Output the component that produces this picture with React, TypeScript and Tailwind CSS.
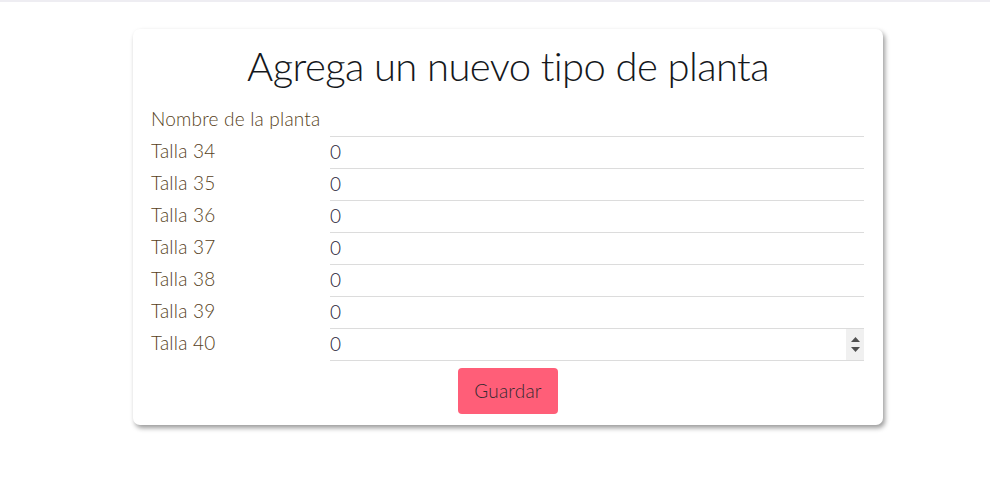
import React from "react";

const sizes = ["34", "35", "36", "37", "38", "39", "40"];

export default function App() {
  const font = { fontFamily: "Lato, 'Open Sans', sans-serif" };
  return (
    <div className="w-[990px] h-[498px] bg-white" style={font}>
      <div className="h-[2px] bg-[#eeedf2]" />
      <div className="flex pt-[27px] pl-[133px]">
        <div className="w-[750px] rounded-[7px] bg-white shadow-[2px_3px_5px_rgba(0,0,0,0.4)] px-[18px] pt-[13px] pb-[11px] flex flex-col">
          <h1 className="h-[48px] flex items-center justify-center text-[40px] font-light tracking-[-0.6px] text-[#15181c] mb-[15px] leading-none">
            Agrega un nuevo tipo de planta
          </h1>
          <div className="flex flex-col pr-[1px]">
            <div className="flex h-[32px] items-center">
              <div className="w-[179px] pb-[3px] text-[19px] tracking-[0.2px] font-light text-[#573f22] whitespace-nowrap">Nombre de la planta</div>
              <div className="flex-1 h-full border-b border-[#dcdcdc]" />
            </div>
            {sizes.map((s, i) => (
              <div key={s} className="flex h-[32px] items-center">
                <div className="w-[179px] pb-[3px] text-[19px] tracking-[0.2px] font-light text-[#573f22]">Talla {s}</div>
                <div className="flex-1 h-full border-b border-[#dcdcdc] flex items-center">
                  <span className="flex-1 pb-[1px] text-[19px] font-light text-[#1f2336]">0</span>
                  {i === sizes.length - 1 && (
                    <div className="w-[18px] h-full bg-[#f0f0f0] flex flex-col items-center justify-center gap-[5px]">
                      <svg width="9" height="5" viewBox="0 0 9 5"><path d="M0 5 L4.5 0 L9 5 Z" fill="#505050" /></svg>
                      <svg width="9" height="5" viewBox="0 0 9 5"><path d="M0 0 L4.5 5 L9 0 Z" fill="#505050" /></svg>
                    </div>
                  )}
                </div>
              </div>
            ))}
          </div>
          <div className="flex justify-center mt-[7px]">
            <button className="w-[100px] h-[46px] rounded-[4px] bg-[#ff5e78] text-[19px] tracking-[0.2px] font-light text-[#352a30]">
              Guardar
            </button>
          </div>
        </div>
      </div>
    </div>
  );
}
